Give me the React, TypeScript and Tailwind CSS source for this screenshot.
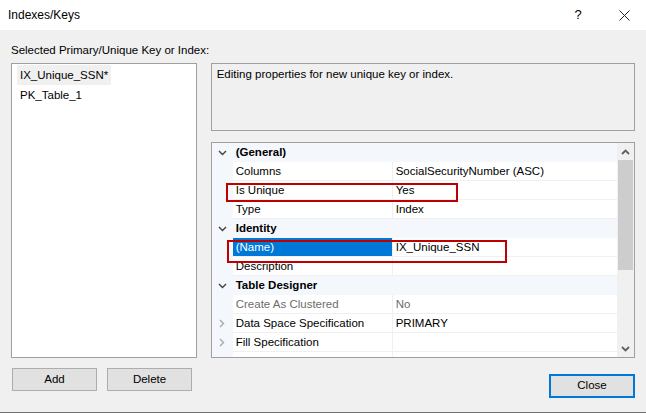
import React from 'react';

const ChevronDown = ({ color = '#404040' }: { color?: string }) => (
  <svg width="9" height="6" viewBox="0 0 9 6">
    <path d="M1 1 L4.5 4.5 L8 1" fill="none" stroke={color} strokeWidth="1.4" />
  </svg>
);

const ChevronRight = ({ color = '#a8a8a8' }: { color?: string }) => (
  <svg width="6" height="9" viewBox="0 0 6 9">
    <path d="M1 1 L4.5 4.5 L1 8" fill="none" stroke={color} strokeWidth="1.4" />
  </svg>
);

type Row =
  | { kind: 'cat'; label: string }
  | { kind: 'prop'; name: string; value: string; muted?: boolean; expand?: boolean; selected?: boolean };

const rows: Row[] = [
  { kind: 'cat', label: '(General)' },
  { kind: 'prop', name: 'Columns', value: 'SocialSecurityNumber (ASC)' },
  { kind: 'prop', name: 'Is Unique', value: 'Yes' },
  { kind: 'prop', name: 'Type', value: 'Index' },
  { kind: 'cat', label: 'Identity' },
  { kind: 'prop', name: '(Name)', value: 'IX_Unique_SSN', selected: true },
  { kind: 'prop', name: 'Description', value: '' },
  { kind: 'cat', label: 'Table Designer' },
  { kind: 'prop', name: 'Create As Clustered', value: 'No', muted: true },
  { kind: 'prop', name: 'Data Space Specification', value: 'PRIMARY', expand: true },
  { kind: 'prop', name: 'Fill Specification', value: '', expand: true },
  { kind: 'prop', name: '', value: '' },
];

const PropertyGrid = () => (
  <div className="relative mt-[11px] h-[216px] border border-[#a0a0a0] bg-white flex overflow-hidden">
    <div className="flex-1 flex flex-col">
      {rows.map((r, i) =>
        r.kind === 'cat' ? (
          <div key={i} className="h-[19px] shrink-0 flex items-center bg-[#f4f7fc]">
            <div className="w-[21px] flex justify-center">
              <ChevronDown />
            </div>
            <span className="pl-[3px] pt-[1px] font-bold">{r.label}</span>
          </div>
        ) : (
          <div key={i} className="h-[19px] shrink-0 flex">
            <div className="w-[21px] flex items-center justify-center bg-[#f4f7fc]">
              {r.expand && <ChevronRight />}
            </div>
            <div
              className={
                'w-[160px] border-b border-r border-[#f0f0f0] flex items-center pl-[3px] pt-[1px] ' +
                (r.selected ? 'bg-[#0078d7] text-white' : r.muted ? 'text-[#6d6d6d]' : '')
              }
            >
              {r.name}
            </div>
            <div
              className={
                'flex-1 border-b border-[#f0f0f0] flex items-center pl-[3px] pt-[1px] ' +
                (r.muted ? 'text-[#6d6d6d]' : '')
              }
            >
              {r.value}
            </div>
          </div>
        )
      )}
    </div>
    <div className="w-[17px] bg-[#f0f0f0] flex flex-col">
      <div className="h-[17px] flex items-center justify-center">
        <svg width="9" height="6" viewBox="0 0 9 6">
          <path d="M1 5 L4.5 1.5 L8 5" fill="none" stroke="#606060" strokeWidth="1.8" />
        </svg>
      </div>
      <div className="mx-[1px] h-[110px] bg-[#cdcdcd]" />
      <div className="flex-1" />
      <div className="h-[17px] flex items-center justify-center">
        <svg width="9" height="6" viewBox="0 0 9 6">
          <path d="M1 1 L4.5 4.5 L8 1" fill="none" stroke="#606060" strokeWidth="1.8" />
        </svg>
      </div>
    </div>
    {/* annotation boxes */}
    <div className="absolute left-[14px] top-[40px] w-[232px] h-[19px] border-2 border-[#c00000]" />
    <div className="absolute left-[15px] top-[97px] w-[280px] h-[23px] border-2 border-[#c00000]" />
  </div>
);

export default function App() {
  return (
    <div
      className="w-[646px] h-[413px] bg-[#f0f0f0] flex flex-col text-[11.5px] text-black border-b border-[#707070]"
      style={{ fontFamily: '"Liberation Sans", Arial, sans-serif' }}
    >
      <div className="h-[30px] bg-white flex items-center shrink-0">
        <span className="pl-[8px] text-[12px]">Indexes/Keys</span>
        <div className="flex-1" />
        <span className="w-[48px] text-center text-[13px]">?</span>
        <div className="w-[44px] flex justify-center">
          <svg width="11" height="11" viewBox="0 0 11 11">
            <path d="M0.5 0.5 L10.5 10.5 M10.5 0.5 L0.5 10.5" stroke="#222" strokeWidth="1" />
          </svg>
        </div>
      </div>

      <div className="flex-1 px-[11px] flex flex-col">
        <div className="mt-[12px] h-[16px] leading-[16px]">Selected Primary/Unique Key or Index:</div>

        <div className="mt-[5px] flex gap-[14px]">
          <div className="w-[186px] h-[295px] bg-white border border-[#a0a0a0] pl-[5px] pt-[1px] flex flex-col items-start">
            <div className="h-[20px] leading-[20px] px-[3px] bg-[#f0f0f0]">IX_Unique_SSN*</div>
            <div className="h-[20px] leading-[20px] px-[3px]">PK_Table_1</div>
          </div>

          <div className="w-[425px] flex flex-col">
            <div className="h-[68px] border border-[#a0a0a0] bg-[#f0f0f0] pl-[5px] pt-[2px] leading-[16px]">
              Editing properties for new unique key or index.
            </div>
            <PropertyGrid />
          </div>
        </div>

        <div className="flex items-start mt-[10px]">
          <button className="ml-[1px] w-[85px] h-[23px] bg-[#e1e1e1] border border-[#adadad]">Add</button>
          <button className="ml-[10px] w-[85px] h-[23px] bg-[#e1e1e1] border border-[#adadad]">Delete</button>
          <div className="flex-1" />
          <button className="mt-[6px] w-[86px] h-[24px] bg-[#e1e1e1] border-2 border-[#0078d7]">Close</button>
        </div>
      </div>
    </div>
  );
}
